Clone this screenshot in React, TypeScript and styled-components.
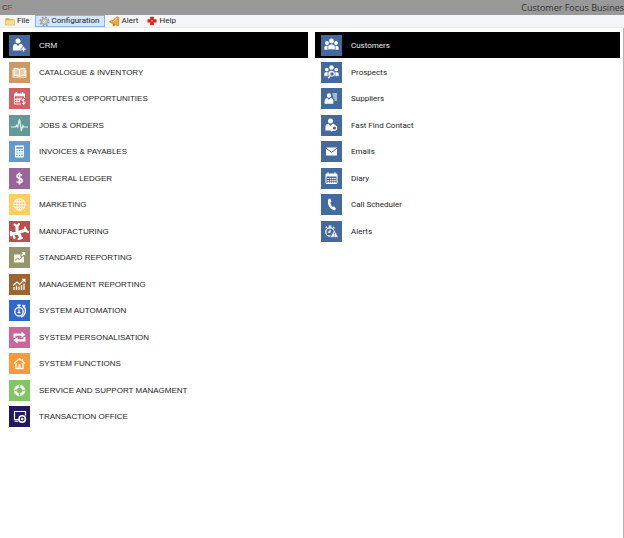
import React, { ReactNode } from "react";
import styled, { createGlobalStyle } from "styled-components";

const GlobalStyle = createGlobalStyle`
  *, *::before, *::after { box-sizing: border-box; }
  body { margin: 0; background: #fff; }
  button { font: inherit; color: inherit; margin: 0; border: 0; background: none; text-align: left; cursor: pointer; }
`;

const Window = styled.div`
  display: flex;
  flex-direction: column;
  min-height: 100vh;
  background: #fff;
  color: #1c1c1c;
  font-family: Roboto, "Liberation Sans", Arial, sans-serif;
`;

const TitleBar = styled.header`
  display: flex;
  align-items: center;
  justify-content: space-between;
  height: 15px;
  padding-left: 2px;
  background: #999;
  overflow: hidden;
`;

const Logo = styled.span`
  font: 700 8px/14px "Liberation Sans", Arial, sans-serif;
  color: #555;
  em { font-style: normal; color: #d8434f; }
`;

const Title = styled.h1`
  margin: 0;
  font: 400 9px/15px "Open Sans", "Noto Sans", sans-serif;
  color: #333;
  white-space: nowrap;
`;

const MenuBar = styled.nav`
  display: flex;
  height: 13px;
  padding-left: 1px;
  background: #f4f5f9;
  border-bottom: 1px solid #ececf0;
  font: 400 8px/10px Roboto, "Open Sans", sans-serif;
`;

const MenuButton = styled.button<{ $active?: boolean }>`
  display: flex;
  align-items: center;
  gap: 2px;
  height: 12px;
  padding: 0 4px 0 3px;
  white-space: nowrap;
  border: 1px solid ${(p) => (p.$active ? "#84b4e6" : "transparent")};
  background: ${(p) => (p.$active ? "#d3e6fa" : "transparent")};
  svg { flex: none; }
`;

const Workspace = styled.main`
  flex: 1;
  display: grid;
  grid-template-columns: 1fr 1fr;
  align-items: start;
  gap: 7px;
  padding: 4px 3px;
  border-right: 1px solid #b4b4b4;
`;

const List = styled.ul<{ $caps?: boolean }>`
  display: grid;
  grid-auto-rows: 27px 26px;
  margin: 0;
  padding: 0;
  list-style: none;
  font-family: ${(p) => (p.$caps ? '"Liberation Sans", Arial, sans-serif' : 'Roboto, Arial, sans-serif')};
`;

const Entry = styled.button<{ $active?: boolean }>`
  display: flex;
  align-items: center;
  gap: 9px;
  width: 100%;
  height: 26px;
  padding: 3px 6px 2px;
  font-size: 8px;
  line-height: 10px;
  white-space: nowrap;
  color: ${(p) => (p.$active ? "#eee" : "#1c1c1c")};
  background: ${(p) => (p.$active ? "#000" : "transparent")};
`;

const Tile = styled.span<{ $color: string }>`
  display: block;
  flex: none;
  width: 21px;
  height: 21px;
  background: ${(p) => p.$color};
  svg { display: block; }
`;

const Glyph = ({ children }: { children: ReactNode }) => (
  <svg width="21" height="21" viewBox="0 0 21 21" fill="none" stroke="none" aria-hidden="true">
    {children}
  </svg>
);

const W = "#fff";
const BLUE = "#44699d";

const Person = ({ x, y, s = 1 }: { x: number; y: number; s?: number }) => (
  <g transform={`translate(${x} ${y}) scale(${s})`} fill={W}>
    <circle cx="0" cy="0" r="2.300" />
    <path d="M-4.600 8.600V5.200Q-4.400 2.700-1.900 2.600L0 4.600 1.900 2.600Q4.400 2.700 4.600 5.200V8.600Z" />
  </g>
);

const Figure = ({ x, y, s = 1 }: { x: number; y: number; s?: number }) => (
  <g transform={`translate(${x} ${y}) scale(${s})`} fill={W}>
    <path d="M-3.500 8.300V5.500Q-3.300 2.900 0 2.900T3.500 5.500V8.300Z" stroke={BLUE} strokeWidth=".7" />
    <circle cx="0" cy="0" r="2.300" />
  </g>
);

const icons: Record<string, ReactNode> = {
  crm: (
    <>
      <Person x={9} y={6} s={1.100} />
      <path d="M12 13.200h1.600v-1.600h1.900v1.600h1.600v1.900h-1.600v1.600h-1.900v-1.600H12Z" fill={W} stroke={BLUE} strokeWidth=".6" />
    </>
  ),
  book: (
    <g stroke={W} strokeWidth="1.100">
      <path d="M10.500 7.400Q8 5.800 5 6.600v7q3-.7 5.500.8 2.500-1.500 5.500-.8v-7q-3-.8-5.500.8Z" fill="#e8cfb0" />
      <path d="M10.500 7.400v7M4 8v7.200h5.500l1 .8 1-.8H17V8" strokeWidth=".8" />
    </g>
  ),
  quotes: (
    <>
      <path d="M5 5.500h11v2.800H5ZM6.600 4h1.500v2H6.600ZM12.800 4h1.500v2h-1.500Z" fill={W} />
      <path d="M5.500 8v8H12M15.500 8v2M8 9.500v5M10.300 9.500v5M12.300 9.500v2M6 11.300h6M6 13.500h5" stroke={W} strokeWidth=".9" />
      <path d="M16 11.600q-2.800-1-2.800.6 0 1 1.400 1.300 1.500.3 1.500 1.300 0 1.700-3 .6M14.600 10.500v6.500" stroke={W} strokeWidth="1" />
    </>
  ),
  pulse: <path d="M2 12h4.500l1-1.700 1.200 1.700L10.500 4l1.800 12 1.400-5.500.9 1.500H19" stroke="#e2f0ee" strokeWidth="1.200" />,
  calculator: (
    <>
      <rect x="6" y="4.500" width="9" height="12" rx=".7" fill={W} />
      <path d="M7.300 6h6.400v1.800H7.300ZM7.300 9h1.400v1.200H7.300ZM9.800 9h1.400v1.200H9.800ZM12.300 9h1.400v1.200h-1.400ZM7.300 11.400h1.400v1.200H7.300ZM9.800 11.400h1.400v1.200H9.800ZM12.300 11.400h1.400v1.200h-1.400ZM7.300 13.800h1.400V15H7.300ZM9.800 13.800h1.400V15H9.800ZM12.300 13.800h1.400V15h-1.400Z" fill="#6499cf" />
    </>
  ),
  dollar: (
    <path d="M13 7.200Q8 5 8 8q0 1.700 2.400 2.300 2.800.7 2.800 2.400 0 3.100-5.500 1M10.500 4.500v12" stroke={W} strokeWidth="1.600" />
  ),
  globe: (
    <g stroke="#fff6dd" strokeWidth="1.100">
      <circle cx="10.500" cy="10.500" r="5.700" />
      <ellipse cx="10.500" cy="10.500" rx="2.700" ry="5.700" />
      <path d="M10.500 4.800v11.400M4.800 10.500h11.400M5.700 7.600h9.600M5.700 13.400h9.600" />
    </g>
  ),
  manufacturing: (
    <g stroke={W} strokeLinecap="round">
      <path d="M8 5v5.500M3.500 12.500h5.500M9.500 11.500l7-2.500M10 13l1.500 3.500" strokeWidth="3" />
      <path d="M5.500 3.500L8 5.500 10 3M16 6.500l.5 3 2.500 1.500M2 10.800v3.500M4 13l1.500 4M9.500 18l3.500-1" strokeWidth="2.200" />
    </g>
  ),
  report: (
    <>
      <path d="M5 7.500h7l-1 1.500 2 1.500 2-1.500v6.500H5Z" fill="#f4f4ea" />
      <path d="M5.800 13.500l2.700-2.300 2 1.300 2.500-2.300" stroke="#94966a" strokeWidth="1" />
      <path d="M12.500 5h3.700v3.600l-1.300-1.200-1.800 1.700-1-.9 1.800-1.900Z" fill={W} />
    </>
  ),
  management: (
    <>
      <path d="M5 16v-3M7.500 16v-4.500M10 16v-3.500M12.500 16v-5M15 16V9.500" stroke="#f5e6d8" strokeWidth="1.500" />
      <path d="M4 11.500L8 8l2.500 2.500L15 6" stroke={W} strokeWidth="1.200" />
      <path d="M12.500 4.700h4v4Z" fill={W} />
    </>
  ),
  automation: (
    <g stroke={W}>
      <circle cx="10" cy="11.800" r="4.200" strokeWidth="1.300" />
      <path d="M8.300 5.300h3.400M10 5.500v2" strokeWidth="1.500" />
      <path d="M10 9.500v2.700M8.500 12.700h3" strokeWidth="1.200" />
      <path d="M14.200 6q3 2.500 2 6.800-1 3.200-4.200 4.300" strokeWidth="1.300" />
      <path d="M13 5l3.500.300-2 2.900Z" fill={W} strokeWidth=".3" />
    </g>
  ),
  personalise: (
    <g fill={W}>
      <path d="M4.500 11V6.500h8V4.500l4 3.200-4 3.200V8.800H6.500V11Z" />
      <path d="M16.500 10v4.500h-8v2l-4-3.200 4-3.200v2.100h6V10Z" />
    </g>
  ),
  home: (
    <g stroke={W} strokeWidth="1.300">
      <path d="M5 10.600l5.500-4.900 5.500 4.900M7 10v5.500h7V10M13.500 5.700v2.500" />
      <path d="M9.500 11.300h2V15h-2Z" fill={W} stroke="none" />
    </g>
  ),
  support: (
    <>
      <circle cx="10.500" cy="10.500" r="4.100" stroke={W} strokeWidth="2.600" />
      <path d="M10.500 5v2.800M10.500 13.200V16M5 10.500h2.800M13.200 10.500H16" stroke="#83c466" strokeWidth="1.500" />
      <circle cx="10.500" cy="10.500" r="5.400" stroke={W} strokeWidth=".6" />
    </>
  ),
  transaction: (
    <>
      <path d="M10 13.500H5.500v-8h11v4" stroke={W} strokeWidth="1.200" />
      <path d="M5.500 15.200h4" stroke={W} strokeWidth="1.200" />
      <circle cx="13.200" cy="13" r="3.200" stroke={W} strokeWidth="1.500" />
      <circle cx="13.200" cy="13" r="1.300" fill={W} />
    </>
  ),
  customers: (
    <>
      <Figure x={6} y={8} s={0.850} />
      <Figure x={15} y={8} s={0.850} />
      <Figure x={10.500} y={6} s={1.050} />
    </>
  ),
  prospects: (
    <>
      <Figure x={5.800} y={7.500} s={0.800} />
      <Figure x={15.200} y={7.500} s={0.800} />
      <Figure x={10.500} y={5.500} s={1} />
      <circle cx="11" cy="12" r="2.200" fill={BLUE} stroke={W} strokeWidth="1" />
      <path d="M9.400 13.600l-2.200 2.600" stroke={W} strokeWidth="1.400" />
    </>
  ),
  suppliers: (
    <>
      <Person x={8} y={7.500} s={0.950} />
      <path d="M11.500 6H16M12 8h4M12.500 10H16M13.500 12H16" stroke="#c3d1e6" strokeWidth="1.300" />
    </>
  ),
  find: (
    <>
      <Person x={9.500} y={6} s={1.100} />
      <circle cx="13.500" cy="13" r="2.200" fill={BLUE} stroke={W} strokeWidth="1.200" />
      <path d="M11.800 14.500l-1.800 1.800" stroke={W} strokeWidth="1.400" />
    </>
  ),
  mail: (
    <>
      <rect x="5" y="6.500" width="11" height="8" rx=".5" fill={W} />
      <path d="M5 7.300l5.500 4 5.500-4" stroke={BLUE} strokeWidth="1" />
    </>
  ),
  diary: (
    <>
      <path d="M5 6h11v9.500H5ZM7 4.300v2M14 4.300v2" stroke={W} strokeWidth="1" />
      <path d="M5 6h11v2.500H5Z" fill={W} />
      <path d="M6.500 10.500h8.500M6.500 12.500h8.500M6.500 14.400h8.500" stroke={W} strokeWidth="1.200" strokeDasharray="1.500 .7" />
    </>
  ),
  phone: (
    <path d="M7.500 5l1.800-.5 1.200 3.300-1.300 1q.6 2.600 2.500 4.200l1.500-.8 1.800 2.900-1.300 1.300Q8.500 15.500 7.100 9.800 6.600 6.600 7.500 5Z" fill={W} />
  ),
  alerts: (
    <>
      <circle cx="9" cy="11" r="4.200" stroke={W} strokeWidth="1.300" />
      <path d="M7.500 5h3M9 5v2M12 6l1.500 1.300M9 8.800v2.400H7M4.800 6.800L6 5.700" stroke={W} strokeWidth="1.200" />
      <path d="M13.300 9l4 7.200h-8Z" fill={W} stroke={BLUE} strokeWidth=".6" />
      <path d="M13.300 11.500v2.200M13.300 14.500v.9" stroke={BLUE} strokeWidth=".9" />
    </>
  ),
};

type Item = { label: string; icon: string; color: string };

const modules: Item[] = [
  { label: "CRM", icon: "crm", color: BLUE },
  { label: "CATALOGUE & INVENTORY", icon: "book", color: "#cc9966" },
  { label: "QUOTES & OPPORTUNITIES", icon: "quotes", color: "#cf6064" },
  { label: "JOBS & ORDERS", icon: "pulse", color: "#639a97" },
  { label: "INVOICES & PAYABLES", icon: "calculator", color: "#6499cf" },
  { label: "GENERAL LEDGER", icon: "dollar", color: "#996699" },
  { label: "MARKETING", icon: "globe", color: "#ffcc66" },
  { label: "MANUFACTURING", icon: "manufacturing", color: "#bd4c4c" },
  { label: "STANDARD REPORTING", icon: "report", color: "#94966a" },
  { label: "MANAGEMENT REPORTING", icon: "management", color: "#996633" },
  { label: "SYSTEM AUTOMATION", icon: "automation", color: "#3366cc" },
  { label: "SYSTEM PERSONALISATION", icon: "personalise", color: "#cc6699" },
  { label: "SYSTEM FUNCTIONS", icon: "home", color: "#ff9933" },
  { label: "SERVICE AND SUPPORT MANAGMENT", icon: "support", color: "#83c466" },
  { label: "TRANSACTION OFFICE", icon: "transaction", color: "#221a5e" },
];

const crmItems: Item[] = [
  { label: "Customers", icon: "customers", color: BLUE },
  { label: "Prospects", icon: "prospects", color: BLUE },
  { label: "Suppliers", icon: "suppliers", color: BLUE },
  { label: "Fast Find Contact", icon: "find", color: BLUE },
  { label: "Emails", icon: "mail", color: BLUE },
  { label: "Diary", icon: "diary", color: BLUE },
  { label: "Call Scheduler", icon: "phone", color: BLUE },
  { label: "Alerts", icon: "alerts", color: BLUE },
];

const EntryList = ({ items, label, caps }: { items: Item[]; label: string; caps?: boolean }) => (
  <List aria-label={label} $caps={caps}>
    {items.map((item, i) => (
      <li key={item.label}>
        <Entry type="button" $active={i === 0} aria-current={i === 0}>
          <Tile $color={item.color}>
            <Glyph>{icons[item.icon]}</Glyph>
          </Tile>
          {item.label}
        </Entry>
      </li>
    ))}
  </List>
);

const FolderIcon = () => (
  <svg width="10" height="9" viewBox="0 0 10 9" aria-hidden="true">
    <path d="M.5 1h3.300l1 1.200H8.500V4H.5Z" fill="#e2b24c" />
    <path d="M.5 8V3h9v5Z" fill="#fbdc8c" stroke="#dfae4a" strokeWidth=".6" />
  </svg>
);

const GearIcon = () => (
  <svg width="11" height="11" viewBox="0 0 11 11" fill="none" aria-hidden="true">
    <circle cx="5.500" cy="5.500" r="4.300" stroke="#979797" strokeWidth="1.500" strokeDasharray="1.800 1.577" />
    <circle cx="5.500" cy="5.500" r="2.800" fill="#f2f2f2" stroke="#aaa" strokeWidth="1.600" />
    <circle cx="5.500" cy="5.500" r="1.200" fill="#fff" stroke="#8a8a8a" strokeWidth=".5" />
  </svg>
);

const BellIcon = () => (
  <svg width="11" height="11" viewBox="0 0 11 11" aria-hidden="true">
    <path d="M8.800.7Q10.300 1 9.800 2.400L9.500 9.700 7.800 9.500.8 6.200.7 5.200Q4.500 5 6.200 2.300 7.300.8 8.800.7Z" fill="#eda73a" stroke="#b9701c" strokeWidth=".6" />
    <path d="M7.800 2.200Q6.500 4.800 4 5.700" fill="none" stroke="#fbdc8c" strokeWidth="1" />
    <circle cx="4.800" cy="9" r="1.200" fill="#c87f22" />
  </svg>
);

const CrossIcon = () => (
  <svg width="10" height="10" viewBox="0 0 10 10" aria-hidden="true">
    <path d="M3.200.8h3.600v2.400h2.700v3.200H6.800v2.500H3.200V6.400H.5V3.200h2.700Z" fill="#e8191b" />
    <path d="M4 4h2v1.600H4Z" fill="#f78a70" />
  </svg>
);

export default function App() {
  return (
    <>
      <GlobalStyle />
      <Window>
        <TitleBar>
          <Logo>C<em>F</em></Logo>
          <Title>Customer Focus Busines</Title>
        </TitleBar>
        <MenuBar aria-label="Main menu">
          <MenuButton type="button"><FolderIcon />File</MenuButton>
          <MenuButton type="button" $active><GearIcon />Configuration</MenuButton>
          <MenuButton type="button"><BellIcon />Alert</MenuButton>
          <MenuButton type="button"><CrossIcon />Help</MenuButton>
        </MenuBar>
        <Workspace>
          <EntryList items={modules} label="Modules" caps />
          <EntryList items={crmItems} label="CRM" />
        </Workspace>
      </Window>
    </>
  );
}
